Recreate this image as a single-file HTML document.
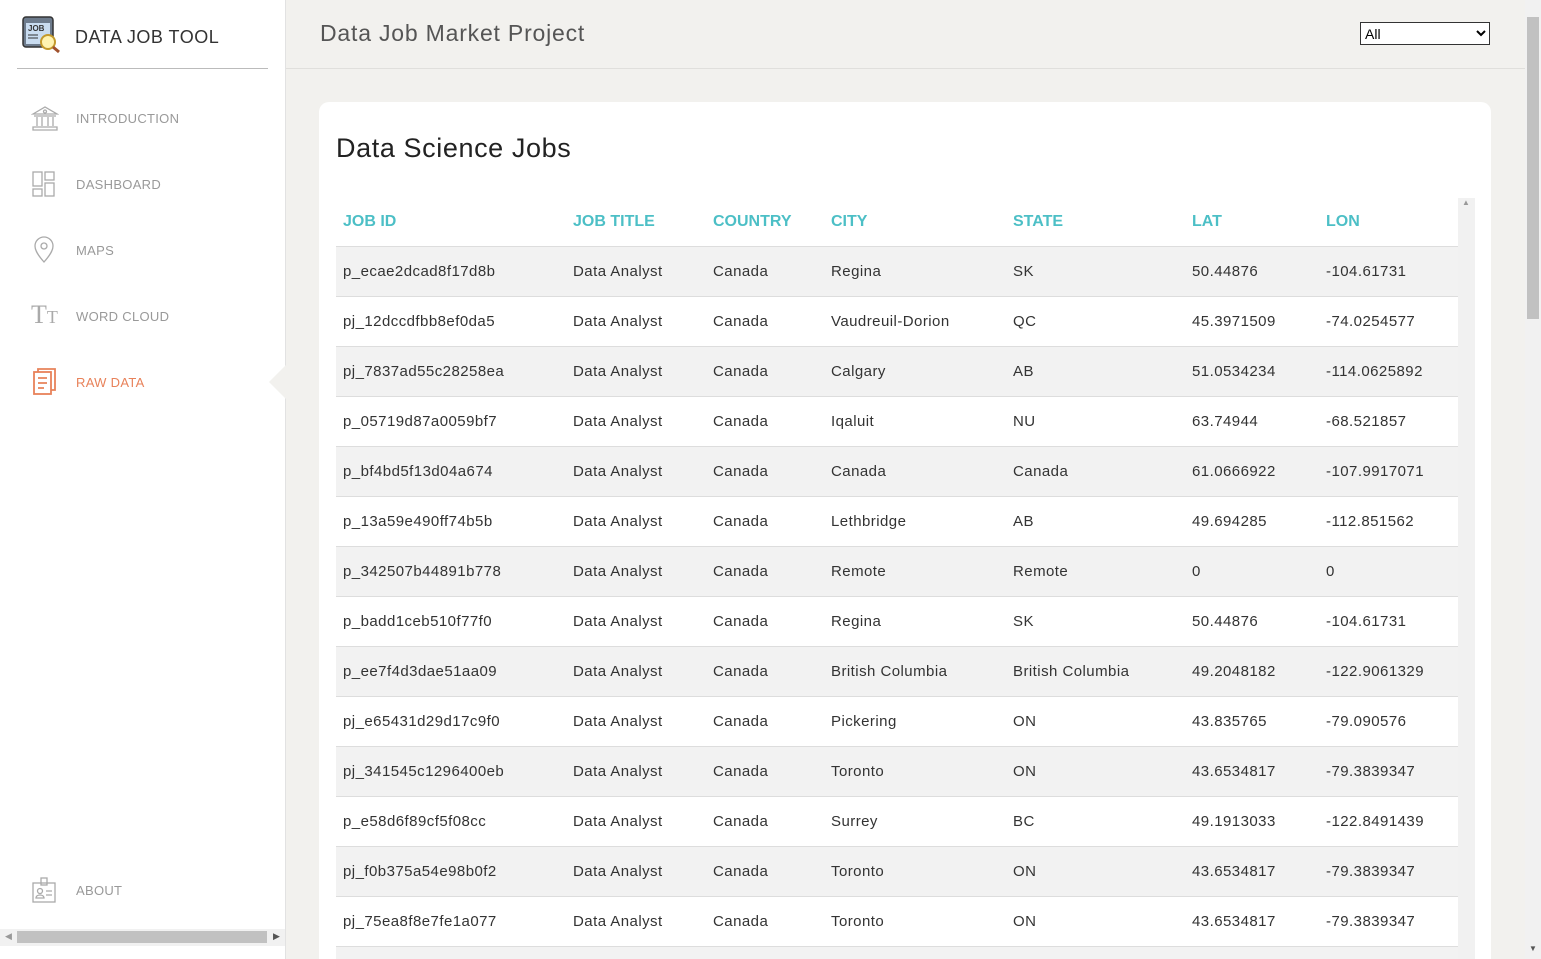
<!DOCTYPE html>
<html style="overflow:hidden;height:959px"><head><meta charset="utf-8"><style>
*{box-sizing:border-box;margin:0;padding:0}
body{width:1541px;height:959px;overflow:hidden;font-family:"Liberation Sans",sans-serif;background:#f2f1ee;position:relative}
#side{position:absolute;left:0;top:0;width:286px;height:959px;background:#fff;border-right:1px solid #e2e2e2}
.logo{position:absolute;left:22px;top:16px}
.brand{position:absolute;left:75px;top:27px;font-size:18px;color:#333;letter-spacing:.5px}
.hr{position:absolute;left:17px;top:68px;width:251px;border-top:1px solid #bbb}
.nav{position:absolute;left:76px;font-size:13px;color:#999;letter-spacing:.3px}
.ic{position:absolute;left:31px}
#hdr{position:absolute;left:286px;top:0;width:1239px;height:69px;border-bottom:1px solid #e0dfdc;background:#f2f1ee}
#hdr h1{position:absolute;left:34px;top:20px;font-weight:normal;font-size:23px;color:#555;letter-spacing:.8px}
select{position:absolute;left:1074px;top:22px;width:130px;height:23px;font-size:14px;background:#fff;border:1px solid #333}
#card{position:absolute;left:319px;top:102px;width:1172px;height:857px;background:#fff;border-radius:10px 10px 0 0;overflow:hidden}
#card h2{position:absolute;left:17px;top:31px;font-weight:normal;font-size:27px;color:#222;letter-spacing:.6px}
table{position:absolute;left:17px;top:96px;width:1122px;border-collapse:collapse;font-size:15px;color:#333;letter-spacing:.45px}
td,th{height:50px;text-align:left;padding-left:7px;border-bottom:1px solid #ddd;white-space:nowrap}
th{color:#4cbfc6;font-size:16px;font-weight:bold;height:48px;letter-spacing:0}
tr:nth-child(even) td{background:#f2f2f2}
#vs{position:absolute;left:1525px;top:0;width:16px;height:959px;background:#f1f1f1}
#vs div{position:absolute;left:2px;top:17px;width:12px;height:302px;background:#c1c1c1}
</style></head><body>
<div id="side">
<svg class="logo" width="40" height="38" viewBox="0 0 40 38"><rect x="1" y="1" width="30" height="30" rx="3" fill="#6d7b8c" stroke="#333" stroke-width="1.5"/><rect x="4" y="7" width="24" height="21" fill="#c9dcf0"/><text x="6" y="15" font-size="8" font-family="Liberation Sans" font-weight="bold" fill="#333">JOB</text><line x1="6" y1="19" x2="16" y2="19" stroke="#333"/><line x1="6" y1="22" x2="16" y2="22" stroke="#333"/><circle cx="26" cy="26" r="7" fill="#fff3b0" stroke="#c49a2c" stroke-width="2"/><line x1="31" y1="31" x2="37" y2="36" stroke="#a0522d" stroke-width="3"/></svg>
<div class="brand">DATA JOB TOOL</div><div class="hr"></div>
<svg class="ic" style="top:104px" width="28" height="28" viewBox="0 0 28 28" fill="none" stroke="#aaa" stroke-width="1.3"><path d="M2 10 L14 3 L26 10 Z M3 12 H25 M6 13 V22 M11 13 V22 M17 13 V22 M22 13 V22 M2 23 H26 V26 H2Z"/><circle cx="14" cy="7.5" r="1.5"/></svg>
<div class="nav" style="top:111px">INTRODUCTION</div>
<svg class="ic" style="top:170px" width="26" height="28" viewBox="0 0 26 28" fill="none" stroke="#aaa" stroke-width="1.3"><rect x="2" y="2" width="9" height="14"/><rect x="14" y="2" width="9" height="8"/><rect x="2" y="19" width="9" height="7"/><rect x="14" y="13" width="9" height="13"/></svg>
<div class="nav" style="top:177px">DASHBOARD</div>
<svg class="ic" style="top:235px" width="28" height="30" viewBox="0 0 28 30" fill="none" stroke="#aaa" stroke-width="1.3"><path d="M13 27 C5 18 4 14 4 11 A9 9 0 0 1 22 11 C22 14 21 18 13 27Z"/><circle cx="13" cy="11" r="3"/></svg>
<div class="nav" style="top:243px">MAPS</div>
<div class="ic" style="top:301px;font-family:'Liberation Serif';font-size:26px;color:#aaa;line-height:28px">T<span style="font-size:18px">T</span></div>
<div class="nav" style="top:309px">WORD CLOUD</div>
<svg class="ic" style="top:367px" width="28" height="30" viewBox="0 0 28 30" fill="none" stroke="#e8825a" stroke-width="1.8"><rect x="3" y="5" width="17" height="22"/><path d="M7 5 V2 H24 V23 H20 M7 11 H16 M7 16 H16 M7 21 H13"/></svg>
<div class="nav" style="top:375px;color:#e8825a">RAW DATA</div>
<svg class="ic" style="top:876px" width="28" height="28" viewBox="0 0 28 28" fill="none" stroke="#aaa" stroke-width="1.3"><rect x="2" y="7" width="22" height="19"/><rect x="10" y="2" width="6" height="7"/><circle cx="9" cy="15" r="2.5"/><path d="M5 22 C5 18 13 18 13 22 Z M15 15 H21 M15 19 H21"/></svg>
<div class="nav" style="top:883px">ABOUT</div>
<div style="position:absolute;left:0;top:929px;width:285px;height:17px;background:#f1f1f1"><div style="position:absolute;left:17px;top:2px;width:250px;height:12px;background:#c1c1c1"></div><span style="position:absolute;left:5px;top:2px;font-size:9px;color:#999">◀</span><span style="position:absolute;left:273px;top:2px;font-size:9px;color:#555">▶</span></div>
</div>
<svg style="position:absolute;left:268px;top:364px" width="19" height="36"><path d="M19 0 L1 18 L19 36Z" fill="#f2f1ee"/></svg>
<div id="hdr"><h1>Data Job Market Project</h1><select><option>All</option></select></div>
<div id="card"><h2>Data Science Jobs</h2>
<div style="position:absolute;left:1139px;top:96px;width:17px;height:804px;background:#f1f1f1"><span style="position:absolute;left:4px;top:0;font-size:8px;color:#999">▲</span></div>
<table>
<tr><th style="width:230px">JOB ID</th><th style="width:140px">JOB TITLE</th><th style="width:118px">COUNTRY</th><th style="width:182px">CITY</th><th style="width:179px">STATE</th><th style="width:134px">LAT</th><th>LON</th></tr>
<tr><td>p_ecae2dcad8f17d8b</td><td>Data Analyst</td><td>Canada</td><td>Regina</td><td>SK</td><td>50.44876</td><td>-104.61731</td></tr>
<tr><td>pj_12dccdfbb8ef0da5</td><td>Data Analyst</td><td>Canada</td><td>Vaudreuil-Dorion</td><td>QC</td><td>45.3971509</td><td>-74.0254577</td></tr>
<tr><td>pj_7837ad55c28258ea</td><td>Data Analyst</td><td>Canada</td><td>Calgary</td><td>AB</td><td>51.0534234</td><td>-114.0625892</td></tr>
<tr><td>p_05719d87a0059bf7</td><td>Data Analyst</td><td>Canada</td><td>Iqaluit</td><td>NU</td><td>63.74944</td><td>-68.521857</td></tr>
<tr><td>p_bf4bd5f13d04a674</td><td>Data Analyst</td><td>Canada</td><td>Canada</td><td>Canada</td><td>61.0666922</td><td>-107.9917071</td></tr>
<tr><td>p_13a59e490ff74b5b</td><td>Data Analyst</td><td>Canada</td><td>Lethbridge</td><td>AB</td><td>49.694285</td><td>-112.851562</td></tr>
<tr><td>p_342507b44891b778</td><td>Data Analyst</td><td>Canada</td><td>Remote</td><td>Remote</td><td>0</td><td>0</td></tr>
<tr><td>p_badd1ceb510f77f0</td><td>Data Analyst</td><td>Canada</td><td>Regina</td><td>SK</td><td>50.44876</td><td>-104.61731</td></tr>
<tr><td>p_ee7f4d3dae51aa09</td><td>Data Analyst</td><td>Canada</td><td>British Columbia</td><td>British Columbia</td><td>49.2048182</td><td>-122.9061329</td></tr>
<tr><td>pj_e65431d29d17c9f0</td><td>Data Analyst</td><td>Canada</td><td>Pickering</td><td>ON</td><td>43.835765</td><td>-79.090576</td></tr>
<tr><td>pj_341545c1296400eb</td><td>Data Analyst</td><td>Canada</td><td>Toronto</td><td>ON</td><td>43.6534817</td><td>-79.3839347</td></tr>
<tr><td>p_e58d6f89cf5f08cc</td><td>Data Analyst</td><td>Canada</td><td>Surrey</td><td>BC</td><td>49.1913033</td><td>-122.8491439</td></tr>
<tr><td>pj_f0b375a54e98b0f2</td><td>Data Analyst</td><td>Canada</td><td>Toronto</td><td>ON</td><td>43.6534817</td><td>-79.3839347</td></tr>
<tr><td>pj_75ea8f8e7fe1a077</td><td>Data Analyst</td><td>Canada</td><td>Toronto</td><td>ON</td><td>43.6534817</td><td>-79.3839347</td></tr>
<tr><td></td><td></td><td></td><td></td><td></td><td></td><td></td></tr>
</table></div>
<div id="vs"><div></div><span style="position:absolute;left:4px;top:944px;font-size:8px;color:#555">▼</span></div>
</body></html>
